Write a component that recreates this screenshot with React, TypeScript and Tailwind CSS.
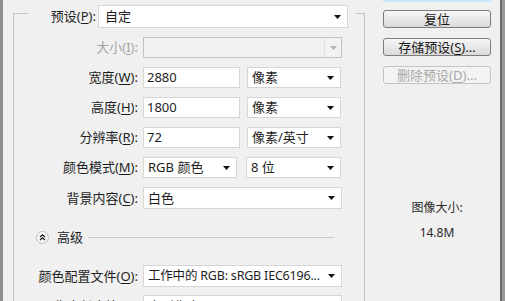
import React from "react";

function Arrow({ disabled = false }: { disabled?: boolean }) {
  return (
    <svg width="7" height="4" viewBox="0 0 7 4" className="shrink-0">
      <path d="M0 0H7L3.5 4Z" fill={disabled ? "#b0b0b0" : "#111"} />
    </svg>
  );
}

function Label({ children, disabled = false }: { children: React.ReactNode; disabled?: boolean }) {
  return (
    <div className={`w-[129px] shrink-0 text-right pr-[5px] whitespace-nowrap ${disabled ? "text-[#a5a5a5]" : "text-[#1e1e1e]"}`}>
      {children}
    </div>
  );
}

function Select({ w, text, pl = "pl-[4px]", tc = "" }: { w: string; text: string; pl?: string; tc?: string }) {
  return (
    <div className={`${w} h-full shrink-0 bg-white border border-[#d6d6d6] flex items-center justify-between ${pl} pr-[6px] whitespace-nowrap`}>
      <span className={tc}>{text}</span>
      <Arrow />
    </div>
  );
}

function Input({ w, text }: { w: string; text: string }) {
  return (
    <div className={`${w} h-full shrink-0 bg-white border border-[#d6d6d6] flex items-center pl-[3px]`}>
      {text}
    </div>
  );
}

function U({ c }: { c: string }) {
  return <span className="underline underline-offset-2">{c}</span>;
}

function Btn({ children, disabled = false, mt }: { children: React.ReactNode; disabled?: boolean; mt: string }) {
  return (
    <div
      className={`${mt} w-[108px] h-[18px] rounded-[3px] border flex items-center justify-center whitespace-nowrap ${
        disabled
          ? "border-[#c4c4c4] bg-[#f3f3f3] text-[#a8a8a8]"
          : "border-[#7d7d7d] bg-gradient-to-b from-[#f7f7f7] to-[#dadada] text-[#1a1a1a]"
      }`}
    >
      {children}
    </div>
  );
}

export default function App() {
  return (
    <div className="w-[505px] h-[301px] overflow-hidden flex bg-[#f0f0f0] text-[13px] leading-none text-[#1e1e1e] font-['Noto_Sans','Noto_Sans_CJK_SC',sans-serif]">
      <div className="w-[3px] shrink-0 bg-[#8e8e8e]" />
      <div className="w-[10px] shrink-0" />
      {/* group box */}
      <div className="w-[352px] shrink-0 mt-[13px] h-[320px] border-l border-t border-r border-[#c4c4c4] flex flex-col">
        {/* preset row */}
        <div className="-mt-[9px] ml-[14px] mr-[8px] h-[23px] bg-[#f0f0f0] flex items-center">
          <div className="w-[70px] shrink-0 text-right pr-[2px] whitespace-nowrap">
            预设(<U c="P" />):
          </div>
          <Select w="w-[250px]" text="自定" pl="pl-[6px]" />
        </div>

        <div className="mt-[9px] h-[21px] flex items-center">
          <Label disabled>
            大小(<U c="I" />):
          </Label>
          <div className="w-[199px] h-full shrink-0 bg-[#f2f2f2] border border-[#c2c2c2] flex items-center justify-end">
            <div className="h-full border-l border-[#e0e0e0] w-[17px] flex items-center justify-center">
              <Arrow disabled />
            </div>
          </div>
        </div>

        <div className="mt-[9px] h-[21px] flex items-center">
          <Label>
            宽度(<U c="W" />):
          </Label>
          <Input w="w-[97px]" text="2880" />
          <div className="w-[7px] shrink-0" />
          <Select w="w-[94px]" text="像素" />
        </div>

        <div className="mt-[9px] h-[21px] flex items-center">
          <Label>
            高度(<U c="H" />):
          </Label>
          <Input w="w-[97px]" text="1800" />
          <div className="w-[7px] shrink-0" />
          <Select w="w-[94px]" text="像素" />
        </div>

        <div className="mt-[9px] h-[21px] flex items-center">
          <Label>
            分辨率(<U c="R" />):
          </Label>
          <Input w="w-[97px]" text="72" />
          <div className="w-[7px] shrink-0" />
          <Select w="w-[94px]" text="像素/英寸" />
        </div>

        <div className="mt-[9px] h-[21px] flex items-center">
          <Label>
            颜色模式(<U c="M" />):
          </Label>
          <Select w="w-[94px]" text="RGB 颜色" />
          <div className="w-[9px] shrink-0" />
          <Select w="w-[95px]" text="8 位" />
        </div>

        <div className="mt-[9px] h-[22px] flex items-center">
          <Label>
            背景内容(<U c="C" />):
          </Label>
          <Select w="w-[199px]" text="白色" />
        </div>

        {/* advanced */}
        <div className="mt-[21px] h-[14px] ml-[22px] mr-[30px] flex items-center">
          <svg width="13" height="13" viewBox="0 0 13 13" className="shrink-0">
            <circle cx="6.5" cy="6.5" r="6" fill="#f7f7f7" stroke="#bcbcbc" />
            <path d="M4 6L6.5 3.8L9 6M4 9L6.5 6.8L9 9" fill="none" stroke="#222" strokeWidth="1.3" />
          </svg>
          <span className="ml-[8px] whitespace-nowrap">高级</span>
          <div className="flex-1 ml-[5px] border-t border-[#c8c8c8]" />
        </div>

        <div className="mt-[21px] h-[22px] flex items-center">
          <Label>
            颜色配置文件(<U c="O" />):
          </Label>
          <Select w="w-[199px]" text="工作中的 RGB: sRGB IEC6196..." tc="text-[12.5px] tracking-[-0.2px]" />
        </div>

        <div className="mt-[8px] h-[22px] flex items-center">
          <Label>
            像素长宽比(<U c="X" />):
          </Label>
          <Select w="w-[199px]" text="方形像素" />
        </div>
      </div>

      {/* right column */}
      <div className="w-[135px] shrink-0 pl-[18px] flex flex-col">
        <div className="w-[108px] h-[2px] bg-[#c9e7f8]" />
        <Btn mt="mt-[8px]">复位</Btn>
        <Btn mt="mt-[10px]">
          存储预设(<U c="S" />)...
        </Btn>
        <Btn mt="mt-[10px]" disabled>
          删除预设(<U c="D" />)...
        </Btn>
        <div className="mt-[118px] w-[108px] text-center text-[12px] text-[#2a2a2a]">图像大小:</div>
        <div className="mt-[13px] w-[108px] text-center text-[12px] text-[#2a2a2a]">14.8M</div>
      </div>

      <div className="w-[5px] shrink-0 bg-[#9a9a9a] border-l-2 border-[#6e6e6e]" />
    </div>
  );
}
